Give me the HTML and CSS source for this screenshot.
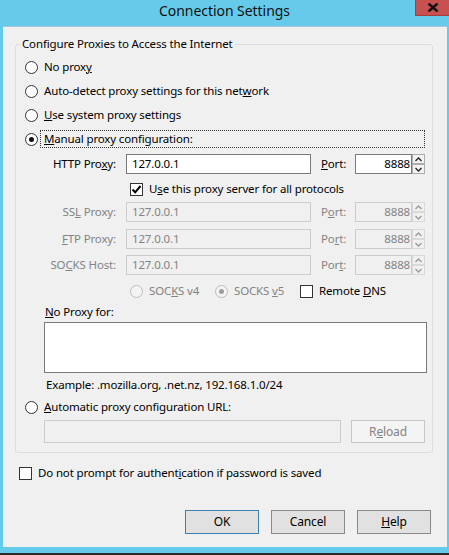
FILE: index.html
```html
<!DOCTYPE html>
<html lang="en">
<head>
<meta charset="utf-8">
<title>Connection Settings</title>
<link rel="stylesheet" href="styles.css">
</head>
<body>
<div class="titlebar">
  <span class="title">Connection Settings</span>
  <span class="close"><svg width="12" height="9" viewBox="0 0 12 9"><path d="M1.5 0.5 L10.5 8.5 M10.5 0.5 L1.5 8.5" stroke="#111" stroke-width="2.4" fill="none"/></svg></span>
</div>
<div class="client">
  <fieldset class="group">
    <legend>Configure Proxies to Access the Internet</legend>
    <div class="option"><span class="radio"></span><span>No prox<u>y</u></span></div>
    <div class="option"><span class="radio"></span><span>Auto-detect proxy settings for this net<u>w</u>ork</span></div>
    <div class="option"><span class="radio"></span><span><u>U</u>se system proxy settings</span></div>
    <div class="option manual"><span class="radio checked"></span><span class="focus"><u>M</u>anual proxy configuration:</span></div>

    <div class="manual-body">
      <div class="prow">
        <span class="plabel">HTTP Pro<u>x</u>y:</span>
        <span class="field">127.0.0.1</span>
        <span class="portlabel"><u>P</u>ort:</span>
        <span class="port"><span class="num">8888</span><span class="spin"><span class="sbtn"><svg width="7" height="5" viewBox="0 0 7 5"><path d="M0.5 4 L3.5 1 L6.5 4" stroke="#222" stroke-width="1.3" fill="none"/></svg></span><span class="sbtn"><svg width="7" height="5" viewBox="0 0 7 5"><path d="M0.5 1 L3.5 4 L6.5 1" stroke="#222" stroke-width="1.3" fill="none"/></svg></span></span></span>
      </div>
      <div class="allrow"><span class="check checked"><svg width="11" height="11" viewBox="0 0 11 11"><path d="M1.5 5.5 L4.2 8.3 L9.5 2" stroke="#000" stroke-width="2" fill="none"/></svg></span><span>U<u>s</u>e this proxy server for all protocols</span></div>
      <div class="prow disabled">
        <span class="plabel">SS<u>L</u> Proxy:</span>
        <span class="field">127.0.0.1</span>
        <span class="portlabel">P<u>o</u>rt:</span>
        <span class="port"><span class="num">8888</span><span class="spin"><span class="sbtn"><svg width="7" height="5" viewBox="0 0 7 5"><path d="M0.5 4 L3.5 1 L6.5 4" stroke="#9a9a9a" stroke-width="1.3" fill="none"/></svg></span><span class="sbtn"><svg width="7" height="5" viewBox="0 0 7 5"><path d="M0.5 1 L3.5 4 L6.5 1" stroke="#9a9a9a" stroke-width="1.3" fill="none"/></svg></span></span></span>
      </div>
      <div class="prow disabled gap7">
        <span class="plabel"><u>F</u>TP Proxy:</span>
        <span class="field">127.0.0.1</span>
        <span class="portlabel">Po<u>r</u>t:</span>
        <span class="port"><span class="num">8888</span><span class="spin"><span class="sbtn"><svg width="7" height="5" viewBox="0 0 7 5"><path d="M0.5 4 L3.5 1 L6.5 4" stroke="#9a9a9a" stroke-width="1.3" fill="none"/></svg></span><span class="sbtn"><svg width="7" height="5" viewBox="0 0 7 5"><path d="M0.5 1 L3.5 4 L6.5 1" stroke="#9a9a9a" stroke-width="1.3" fill="none"/></svg></span></span></span>
      </div>
      <div class="prow disabled gap6">
        <span class="plabel">SO<u>C</u>KS Host:</span>
        <span class="field">127.0.0.1</span>
        <span class="portlabel">Por<u>t</u>:</span>
        <span class="port"><span class="num">8888</span><span class="spin"><span class="sbtn"><svg width="7" height="5" viewBox="0 0 7 5"><path d="M0.5 4 L3.5 1 L6.5 4" stroke="#9a9a9a" stroke-width="1.3" fill="none"/></svg></span><span class="sbtn"><svg width="7" height="5" viewBox="0 0 7 5"><path d="M0.5 1 L3.5 4 L6.5 1" stroke="#9a9a9a" stroke-width="1.3" fill="none"/></svg></span></span></span>
      </div>
      <div class="socks-ver">
        <span class="sv disabled"><span class="radio dis"></span><span>SOC<u>K</u>S v4</span></span>
        <span class="sv disabled"><span class="radio dis checked"></span><span>SOCKS <u>v</u>5</span></span>
        <span class="sv"><span class="check"></span><span>Remote <u>D</u>NS</span></span>
      </div>
      <div class="np-label"><u>N</u>o Proxy for:</div>
      <div class="textarea"></div>
      <div class="example">Example: .mozilla.org, .net.nz, 192.168.1.0/24</div>
    </div>

    <div class="option"><span class="radio"></span><span><u>A</u>utomatic proxy configuration URL:</span></div>
    <div class="url-row">
      <span class="url-field"></span>
      <span class="btn reload">R<u>e</u>load</span>
    </div>
  </fieldset>

  <div class="option auth"><span class="check"></span><span>Do not prompt for authent<u>i</u>cation if password is saved</span></div>

  <div class="buttons">
    <span class="btn default">OK</span>
    <span class="btn">Cancel</span>
    <span class="btn"><u>H</u>elp</span>
  </div>
</div>
<div class="frame-bottom"></div>
</body>
</html>
```

FILE: styles.css
```css
* { box-sizing: border-box; }
html, body { margin: 0; padding: 0; }
body {
  width: 449px;
  height: 555px;
  overflow: hidden;
  background: #66cbea;
  font-family: "Noto Sans", "Open Sans", sans-serif;
  font-size: 11.5px;
  letter-spacing: -0.15px;
  color: #000;
  display: flex;
  flex-direction: column;
}
u { text-decoration: underline; text-decoration-thickness: 1px; text-underline-offset: 1px; }

.titlebar {
  height: 26px;
  flex: none;
  display: grid;
  grid-template-columns: 1fr auto 1fr;
}
.title { grid-column: 2; font-size: 14px; letter-spacing: -0.05px; line-height: 22px; color: #111; }
.close {
  grid-column: 3;
  justify-self: end;
  align-self: start;
  width: 34px;
  height: 16px;
  background: #c75050;
  border-left: 1px solid #a23f3f;
  border-bottom: 1px solid #a23f3f;
  display: flex;
  align-items: center;
  justify-content: center;
}

.client {
  flex: none;
  height: 521px;
  margin: 0 2px 0 3px;
  background: #f0f0f0;
  border-top: 1px solid #a8c6d6;
  display: flex;
  flex-direction: column;
}
.frame-bottom { flex: none; height: 2px; margin-top: 6px; background: #2a2a2a; }

.group {
  margin: 9px 0 0 12px;
  width: 418px;
  border: 1px solid #d9dde0;
  border-radius: 3px;
  padding: 3px 7px 9px 9px;
  min-width: 0;
}
.group legend { padding: 0 2px; margin-left: -5px; line-height: 16px; }

.option { display: flex; align-items: center; height: 24px; gap: 6px; line-height: 16px; }
.option.manual { gap: 2px; }
.focus { flex: 1; height: 18px; border: 1px dotted #333; padding: 0 3px; line-height: 16px; }

.radio {
  flex: none;
  width: 13px;
  height: 13px;
  border: 1px solid #333;
  border-radius: 50%;
  background: #fff;
  display: flex;
  align-items: center;
  justify-content: center;
}
.radio.checked::after { content: ""; width: 5px; height: 5px; border-radius: 50%; background: #111; }
.radio.dis { border-color: #bcbcbc; background: #f4f4f4; }
.radio.dis.checked::after { background: #9c9c9c; }

.check {
  flex: none;
  width: 13px;
  height: 13px;
  border: 1px solid #333;
  background: #fff;
  display: flex;
  align-items: center;
  justify-content: center;
}

.manual-body { margin: 3px 0 0 19px; }
.prow {
  display: grid;
  grid-template-columns: 72px 185px 24px 70px;
  column-gap: 10px;
  align-items: center;
  height: 20px;
}
.prow.gap7 { margin-top: 7px; }
.prow.gap6 { margin-top: 6px; }
.plabel { text-align: right; white-space: nowrap; line-height: 16px; }
.portlabel { white-space: nowrap; line-height: 16px; }
.field {
  height: 20px;
  border: 1px solid #7a7a7a;
  background: #fff;
  padding: 0 5px;
  line-height: 18px;
}
.port { display: flex; height: 20px; }
.num {
  width: 57px;
  height: 20px;
  border: 1px solid #7a7a7a;
  background: #fff;
  text-align: right;
  padding-right: 1px;
  line-height: 18px;
}
.spin { width: 13px; display: flex; flex-direction: column; }
.sbtn {
  height: 10px;
  border: 1px solid #acacac;
  background: #f2f2f2;
  display: flex;
  align-items: center;
  justify-content: center;
}
.prow.disabled { color: #838383; }
.prow.disabled .field, .prow.disabled .num { border-color: #cccccc; background: #f0f0f0; }
.prow.disabled .sbtn { border-color: #d9d9d9; background: #f0f0f0; }

.allrow { display: flex; align-items: center; height: 28px; padding: 2px 0 0 86px; gap: 6px; line-height: 16px; }

.socks-ver { display: flex; align-items: center; height: 24px; margin: 4px 0 0 86px; line-height: 16px; }
.sv { display: flex; align-items: center; gap: 6px; width: 85px; white-space: nowrap; }
.sv.disabled { color: #838383; }

.np-label { height: 18px; line-height: 18px; padding-left: 1px; }
.textarea { margin-top: 1px; width: 383px; height: 51px; border: 1px solid #7a7a7a; background: #fff; }
.example { margin-top: 1px; height: 21px; line-height: 21px; padding-left: 2px; }

.url-row { display: flex; gap: 10px; margin: 1px 0 0 19px; height: 23px; }
.url-field { width: 297px; height: 23px; border: 1px solid #cccccc; background: #f0f0f0; }

.btn {
  width: 74px;
  height: 24px;
  border: 1px solid #8a8a8a;
  background: #e1e1e1;
  display: flex;
  align-items: center;
  justify-content: center;
  line-height: 16px;
  font-size: 12px;
}
.btn.default { border-color: #3c7fb1; }
.btn.reload { height: 23px; color: #838383; background: #f4f4f4; border-color: #c6c6c6; }

.option.auth { margin: 8px 0 0 16px; }
.buttons { display: flex; justify-content: flex-end; gap: 12px; margin: 25px 16px 0 0; }
```
